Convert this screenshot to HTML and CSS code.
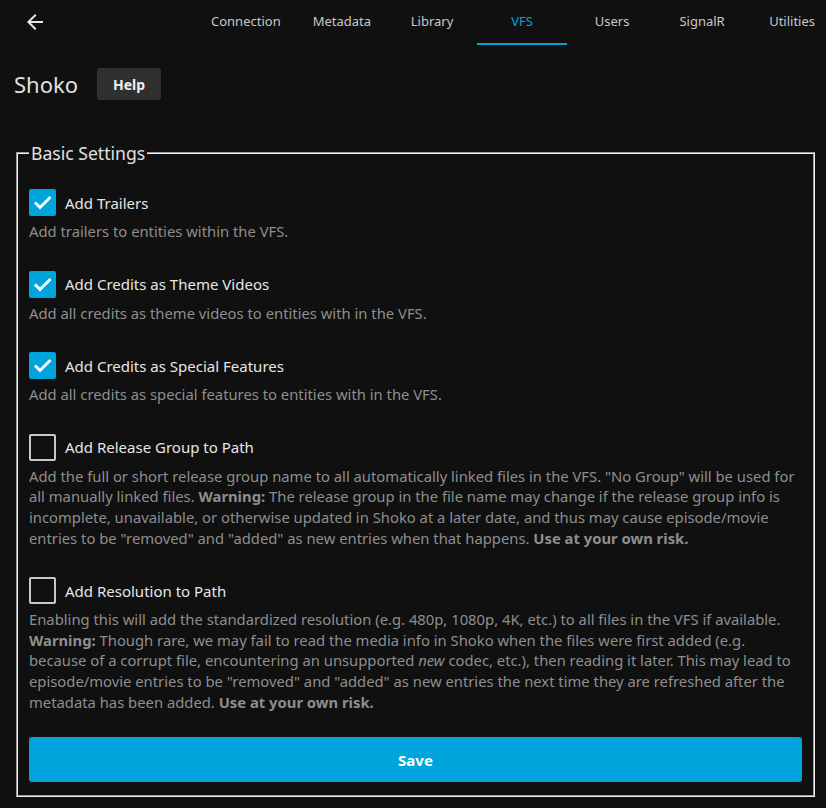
FILE: index.html
```html
<!DOCTYPE html>
<html lang="en">
<head>
<meta charset="utf-8">
<title>Shoko</title>
<link rel="stylesheet" href="styles.css">
</head>
<body>
<header class="topbar">
  <button class="back" type="button" aria-label="Back">
    <svg viewBox="0 0 24 24" width="24" height="24"><path d="M20 11H7.83l5.59-5.59L12 4l-8 8 8 8 1.41-1.41L7.83 13H20v-2z" fill="currentColor"/></svg>
  </button>
  <nav class="tabs">
    <a class="tab">Connection</a>
    <a class="tab">Metadata</a>
    <a class="tab">Library</a>
    <a class="tab active">VFS</a>
    <a class="tab">Users</a>
    <a class="tab">SignalR</a>
    <a class="tab">Utilities</a>
  </nav>
</header>
<main class="content">
  <div class="title-row">
    <h1 class="title">Shoko</h1>
    <button class="help" type="button">Help</button>
  </div>
  <form class="settings-form">
    <fieldset class="settings">
      <legend class="legend">Basic Settings</legend>

      <div class="item">
        <label class="check">
          <span class="box checked"><svg viewBox="0 0 27 27" width="27" height="27"><polyline points="6,13.5 11,18.5 21.5,8" fill="none" stroke="#fff" stroke-width="3"/></svg></span>
          <span class="label-text">Add Trailers</span>
        </label>
        <div class="desc">Add trailers to entities within the VFS.</div>
      </div>

      <div class="item">
        <label class="check">
          <span class="box checked"><svg viewBox="0 0 27 27" width="27" height="27"><polyline points="6,13.5 11,18.5 21.5,8" fill="none" stroke="#fff" stroke-width="3"/></svg></span>
          <span class="label-text">Add Credits as Theme Videos</span>
        </label>
        <div class="desc">Add all credits as theme videos to entities with in the VFS.</div>
      </div>

      <div class="item">
        <label class="check">
          <span class="box checked"><svg viewBox="0 0 27 27" width="27" height="27"><polyline points="6,13.5 11,18.5 21.5,8" fill="none" stroke="#fff" stroke-width="3"/></svg></span>
          <span class="label-text">Add Credits as Special Features</span>
        </label>
        <div class="desc">Add all credits as special features to entities with in the VFS.</div>
      </div>

      <div class="item">
        <label class="check">
          <span class="box"></span>
          <span class="label-text">Add Release Group to Path</span>
        </label>
        <div class="desc">Add the full or short release group name to all automatically linked files in the VFS. "No Group" will be used for all manually linked files. <b>Warning:</b> The release group in the file name may change if the release group info is incomplete, unavailable, or otherwise updated in Shoko at a later date, and thus may cause episode/movie entries to be "removed" and "added" as new entries when that happens. <b>Use at your own risk.</b></div>
      </div>

      <div class="item">
        <label class="check">
          <span class="box"></span>
          <span class="label-text">Add Resolution to Path</span>
        </label>
        <div class="desc">Enabling this will add the standardized resolution (e.g. 480p, 1080p, 4K, etc.) to all files in the VFS if available. <b>Warning:</b> Though rare, we may fail to read the media info in Shoko when the files were first added (e.g. because of a corrupt file, encountering an unsupported <i>new</i> codec, etc.), then reading it later. This may lead to episode/movie entries to be "removed" and "added" as new entries the next time they are refreshed after the metadata has been added. <b>Use at your own risk.</b></div>
      </div>

      <button class="save" type="button">Save</button>
    </fieldset>
  </form>
</main>
</body>
</html>
```
FILE: styles.css
```css
* { box-sizing: border-box; }
html, body {
  margin: 0;
  background: #101010;
  color: #e0e0e0;
  font-family: "Noto Sans", "Open Sans", sans-serif;
  overflow: hidden;
}
.topbar {
  display: flex;
  align-items: stretch;
  height: 45px;
  overflow: hidden;
}
.back {
  display: flex;
  align-items: center;
  justify-content: center;
  width: 24px;
  height: 43px;
  margin-left: 23px;
  padding: 0;
  border: 0;
  background: none;
  color: #e8e8e8;
}
.tabs {
  display: flex;
  flex-shrink: 0;
  margin-left: 148px;
}
.tab {
  flex-shrink: 0;
  min-width: 90px;
  padding: 0 16px 2px;
  display: flex;
  align-items: center;
  justify-content: center;
  font-size: 13px;
  color: #c8c8c8;
  border-bottom: 2px solid transparent;
}
.tab.active {
  color: #00a4dc;
  border-bottom-color: #00a4dc;
}
.content {
  padding: 23px 9px 0 14px;
}
.title-row {
  display: flex;
  align-items: center;
  gap: 19px;
  height: 32px;
}
.title {
  margin: 0;
  font-size: 22px;
  font-weight: 400;
  color: #e0e0e0;
}
.help {
  height: 32px;
  width: 64px;
  border: 0;
  border-radius: 3px;
  background: #303030;
  color: #f0f0f0;
  font-family: inherit;
  font-size: 14px;
  font-weight: 700;
  padding: 0;
}
.settings-form {
  margin-top: 41px;
}
.settings {
  margin: 0 2px;
  padding: 24px 11px 13px;
  border: 2px groove #f0f0f0;
}
.legend {
  padding: 0 2px;
  font-size: 17.6px;
  line-height: 24px;
  color: #e0e0e0;
}
.item {
  margin-bottom: 29px;
}
.check {
  display: flex;
  align-items: center;
  gap: 9px;
  height: 27px;
}
.box {
  width: 27px;
  height: 27px;
  border: 2px solid #c8c8c8;
  border-radius: 2px;
  flex-shrink: 0;
}
.box.checked {
  border: 0;
  background: #00a4dc;
}
.box svg { display: block; }
.label-text {
  font-size: 15px;
  color: #e6e6e6;
}
.desc {
  margin-top: 5px;
  font-size: 14.8px;
  line-height: 20.6px;
  color: #8e8e8e;
}
.desc b { font-weight: 700; }
.save {
  display: block;
  width: 100%;
  height: 45px;
  margin-top: -4px;
  border: 0;
  border-radius: 3px;
  background: #00a4dc;
  color: #fff;
  font-family: inherit;
  font-size: 15px;
  font-weight: 700;
}
```
